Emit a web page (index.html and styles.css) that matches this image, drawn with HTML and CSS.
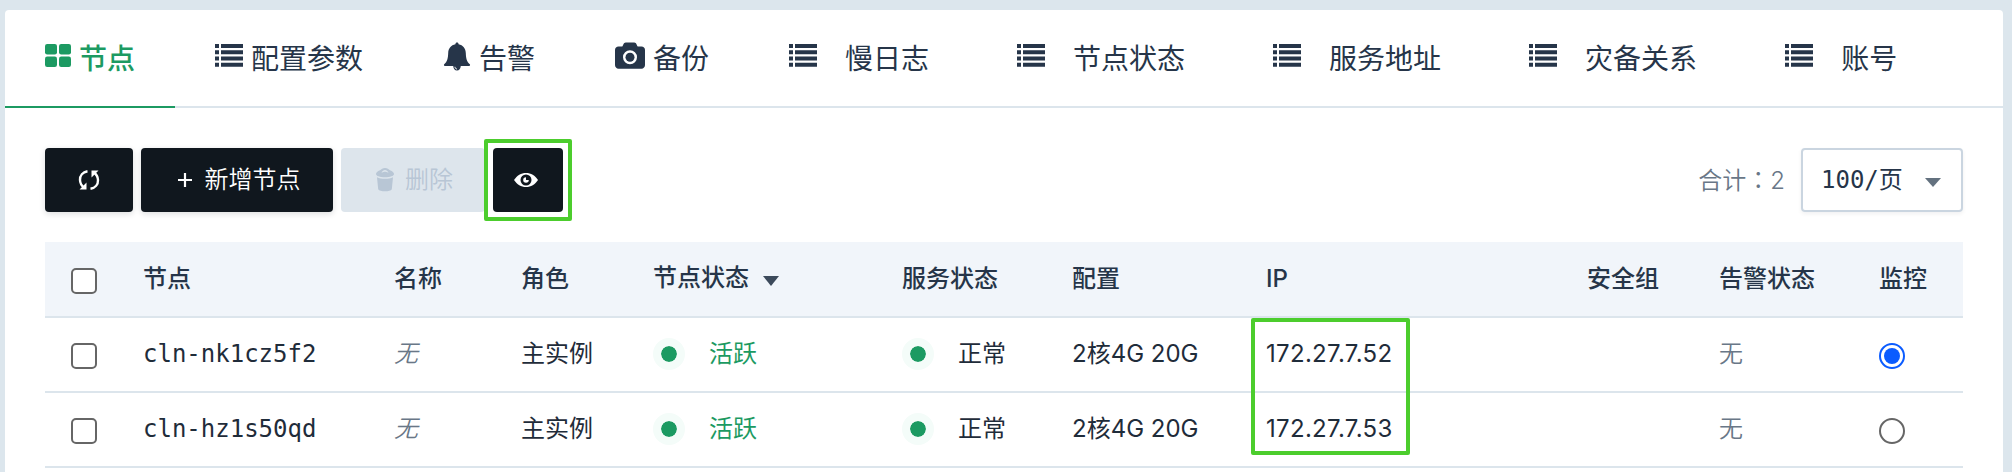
FILE: index.html
```html
<!DOCTYPE html>
<html lang="zh-CN">
<head>
<meta charset="utf-8">
<title>节点</title>
<link rel="stylesheet" href="styles.css">
</head>
<body>
<svg class="defs" width="0" height="0">
  <symbol id="list" viewBox="0 0 28 23">
    <path d="M0 0h4v4H0zM6 0h22v4H6zM0 6.3h4v4H0zM6 6.3h22v4H6zM0 12.5h4v4H0zM6 12.5h22v4H6zM0 18.7h4v4H0zM6 18.7h22v4H6z"/>
  </symbol>
</svg>
<main class="panel">
  <nav class="tabs">
    <a class="tab active"><svg class="grid-icon" width="26" height="23" viewBox="0 0 26 23"><rect width="12" height="10.5" rx="2.2"/><rect x="14" width="12" height="10.5" rx="2.2"/><rect y="12.5" width="12" height="10.5" rx="2.2"/><rect x="14" y="12.5" width="12" height="10.5" rx="2.2"/></svg><span>节点</span></a>
    <a class="tab"><svg width="28" height="23"><use href="#list"/></svg><span>配置参数</span></a>
    <a class="tab"><svg class="bell" width="28" height="29" viewBox="0 0 28 29"><path d="M14 .5c1 0 1.500.6 1.600 1.700C20 3 22.600 6.300 22.800 11c.2 5.600 1 8.600 4 11.200.6.600.2 1.700-.6 1.700H17.800c-.2 2.600-1.600 4.600-3.800 4.600s-3.600-2-3.800-4.600H1.800c-.8 0-1.200-1.100-.6-1.700 3-2.600 3.800-5.600 4-11.200C5.400 6.300 8 3 12.400 2.200 12.500 1.100 13 .5 14 .5z"/><path class="shine" d="M12 24.800c0 1.300.8 2.200 2 2.200"/></svg><span>告警</span></a>
    <a class="tab"><svg class="camera" width="30" height="27" viewBox="0 0 30 27"><path fill-rule="evenodd" d="M3.500 4.500h3.800c1-1 1-4 3.500-4h8.400c2.500 0 2.500 3 3.500 4h3.800C28.500 4.500 30 6 30 8v15c0 2-1.500 3.700-3.500 3.700h-23C1.500 26.700 0 25 0 23V8c0-2 1.500-3.500 3.500-3.500zM15 8.200a7 7 0 1 0 0 14 7 7 0 0 0 0-14z"/><circle cx="15" cy="15.200" r="4.500"/></svg><span>备份</span></a>
    <a class="tab wide"><svg width="28" height="23"><use href="#list"/></svg><span>慢日志</span></a>
    <a class="tab wide"><svg width="28" height="23"><use href="#list"/></svg><span>节点状态</span></a>
    <a class="tab wide"><svg width="28" height="23"><use href="#list"/></svg><span>服务地址</span></a>
    <a class="tab wide"><svg width="28" height="23"><use href="#list"/></svg><span>灾备关系</span></a>
    <a class="tab wide"><svg width="28" height="23"><use href="#list"/></svg><span>账号</span></a>
  </nav>

  <section class="toolbar">
    <button class="btn refresh"><svg width="22" height="20" viewBox="0 0 22 20"><g fill="none" stroke="#fff" stroke-width="2.400"><path d="M9.500 1.200C4.800 2 1.800 5.500 2 10c.1 3 1.500 5.600 4 7.500"/><path d="M12.500 18.800C17.200 18 20.200 14.500 20 10c-.1-3-1.500-5.600-4-7.500"/></g><path fill="#fff" d="M8.500 12.500V19.500H1.500zM13.500 7.500V.5h7z"/></svg></button>
    <button class="btn add"><svg width="14" height="14" viewBox="0 0 14 14"><path d="M7 0v14M0 7h14" stroke="#fff" stroke-width="2.200"/></svg><span>新增节点</span></button>
    <button class="btn delete" disabled><svg width="18" height="24" viewBox="0 0 18 24"><path fill-rule="evenodd" d="M9 0c2.500 0 3.500 1.500 5 2.300C16.500 3.300 18 4.500 18 6c0 2-4 3.200-9 3.200S0 8 0 6c0-1.500 1.500-2.700 4-3.700C5.500 1.500 6.500 0 9 0zm0 2C7.500 2 6.500 3 5.500 4.300 6.500 5 7.500 3.800 9 3.800s2.500 1.200 3.500.5C11.500 3 10.500 2 9 2z"/><path d="M1 9.300c4 2 12 2 16 0l-1.200 12C14.500 24 3.500 24 2.200 21.300z"/></svg><span>删除</span></button>
    <button class="btn view"><svg width="24" height="14" viewBox="0 0 24 14"><path fill="#fff" d="M0 7C3 2.500 7 0 12 0s9 2.500 12 7c-3 4.500-7 7-12 7S3 11.500 0 7z"/><circle cx="12" cy="7" r="5.500" fill="#10171e"/><path fill="#fff" d="M12 4.200V7h2.800A2.800 2.800 0 1 1 12 4.200z"/></svg><i class="mark"></i></button>
    <div class="pager">
      <span class="total">合计<span class="colon" lang="zh-TW">：</span>2</span>
      <div class="select"><span>100/页</span><i class="caret"></i></div>
    </div>
  </section>

  <div class="table-wrap">
    <table>
      <colgroup><col class="c-check"><col class="c-node"><col class="c-name"><col class="c-role"><col class="c-state"><col class="c-service"><col class="c-config"><col class="c-ip"><col class="c-group"><col class="c-alarm"><col class="c-monitor"></colgroup>
      <thead>
        <tr><th><i class="check"></i></th><th>节点</th><th>名称</th><th>角色</th><th><span class="sort">节点状态<i class="caret"></i></span></th><th>服务状态</th><th>配置</th><th>IP</th><th>安全组</th><th>告警状态</th><th>监控</th></tr>
      </thead>
      <tbody>
        <tr><td><i class="check"></i></td><td class="mono">cln-nk1cz5f2</td><td class="none"><em>无</em></td><td>主实例</td><td><span class="status green"><i class="dot"></i>活跃</span></td><td><span class="status"><i class="dot"></i>正常</span></td><td>2核4G 20G</td><td class="ip">172.27.7.52</td><td></td><td class="none">无</td><td><i class="radio on"></i></td></tr>
        <tr><td><i class="check"></i></td><td class="mono">cln-hz1s50qd</td><td class="none"><em>无</em></td><td>主实例</td><td><span class="status green"><i class="dot"></i>活跃</span></td><td><span class="status"><i class="dot"></i>正常</span></td><td>2核4G 20G</td><td class="ip">172.27.7.53</td><td></td><td class="none">无</td><td><i class="radio"></i></td></tr>
      </tbody>
    </table>
    <i class="ip-mark"></i>
  </div>
</main>
</body>
</html>
```
FILE: styles.css
```css
* { box-sizing: border-box; }

body {
  margin: 0;
  padding: 10px 9px 0 5px;
  height: 472px;
  overflow: hidden;
  background: #dce6ed;
  color: #263549;
  font: 24px/36px Inter, "Noto Sans CJK SC", sans-serif;
}

.defs { position: absolute; }

.panel {
  height: 480px;
  background: #fff;
  border-radius: 4px 4px 0 0;
}

/* tabs */
.tabs {
  display: flex;
  height: 98px;
  border-bottom: 2px solid #dce5ec;
}
.tab {
  display: flex;
  flex: none;
  height: 98px;
  padding: 34px 40px 0;
  gap: 8px;
  font-size: 28px;
  line-height: 30px;
  fill: #263549;
}
.tab.wide { padding-right: 48px; gap: 28px; }
.tab.active {
  color: #1c9a62;
  fill: #1c9a62;
  font-weight: 500;
  border-bottom: 2px solid #1c9a62;
}
.tab svg { flex: none; }
.bell { margin: -2px 0 0; }
.shine { fill: none; stroke: #fff; stroke-width: 1; }
.camera { margin-top: -2px; }

/* toolbar */
.toolbar {
  display: flex;
  gap: 8px;
  padding: 40px 40px 0;
  height: 134px;
}
.btn {
  display: flex;
  align-items: center;
  justify-content: center;
  height: 64px;
  padding: 0;
  border: 0;
  border-radius: 4px;
  background: #10171e;
  color: #fff;
  font: inherit;
  font-weight: 350;
  box-shadow: 0 2px 6px rgba(16, 23, 30, .14);
}
.refresh { width: 88px; }
.add { width: 192px; gap: 13px; padding-left: 4px; }
.delete {
  width: 144px;
  gap: 11px;
  padding-left: 3px;
  background: #dde5ec;
  color: #b8c6d5;
  fill: #b8c6d5;
  box-shadow: none;
}
.view { position: relative; width: 70px; padding-right: 5px; box-shadow: none; }
.mark {
  position: absolute;
  inset: -9px;
  border: 4px solid #4ccd2d;
  border-radius: 2px;
  box-shadow: inset 0 0 0 5px #fff;
}
.pager {
  display: flex;
  align-items: center;
  height: 64px;
  margin-left: auto;
}
.total { margin-right: 16px; color: #697787; font-weight: 350; }
.colon { font-family: "Noto Sans CJK TC", sans-serif; }
.select {
  display: flex;
  align-items: center;
  justify-content: space-between;
  width: 162px;
  height: 64px;
  padding: 0 20px 0 18px;
  border: 2px solid #cad5e0;
  border-radius: 4px;
  box-shadow: 0 2px 4px rgba(16, 23, 30, .06);
  font-family: "DejaVu Sans Mono", "Noto Sans CJK SC", monospace;
}
.caret {
  display: block;
  border: 8px solid transparent;
  border-top: 9px solid #63717f;
  border-bottom: 0;
}
.select .caret { margin-top: 4px; }

/* table */
.table-wrap { position: relative; margin: 0 40px; }
table {
  width: 1918px;
  table-layout: fixed;
  border-collapse: separate;
  border-spacing: 0;
}
.c-check { width: 98px; }
.c-node { width: 251px; }
.c-name { width: 127px; }
.c-role { width: 132px; }
.c-state { width: 249px; }
.c-service { width: 170px; }
.c-config { width: 194px; }
.c-ip { width: 321px; }
.c-group { width: 132px; }
.c-alarm { width: 160px; }
.c-monitor { width: 84px; }
th, td {
  height: 75px;
  padding: 0;
  border-bottom: 2px solid #dce5ec;
  text-align: left;
  vertical-align: middle;
  white-space: nowrap;
}
th { height: 76px; background: #f1f5fa; font-weight: 500; }
td { padding-bottom: 2px; color: #1f2c3a; }
.mono { font-family: "DejaVu Sans Mono", monospace; }
.ip { letter-spacing: .3px; }
.none { color: #697787; font-weight: 350; }
.sort { display: flex; align-items: center; gap: 14px; margin-top: -2px; }
.sort .caret { margin-top: 5px; border-top: 10px solid #3c4a5b; }
.status { display: flex; align-items: center; }
.green { color: #1c9a62; }
.dot {
  width: 32px;
  height: 32px;
  margin-right: 24px;
  border: 8px solid #f4fcf9;
  border-radius: 50%;
  background: #1c9a62;
  background-clip: padding-box;
}
.check, .radio {
  display: block;
  width: 26px;
  height: 26px;
  margin-top: 3px;
  border: 2px solid #666;
  background: #fff;
}
td .check, td .radio { margin-top: 5px; }
.check { margin-left: 26px; border-radius: 5px; }
.radio { border-radius: 50%; }
.radio.on {
  padding: 3px;
  border-color: #0b5cff;
  background: #0b5cff content-box;
}
.ip-mark {
  position: absolute;
  left: 1206px;
  top: 76px;
  width: 159px;
  height: 137px;
  border: 4px solid #4ccd2d;
  border-radius: 2px;
}
```
